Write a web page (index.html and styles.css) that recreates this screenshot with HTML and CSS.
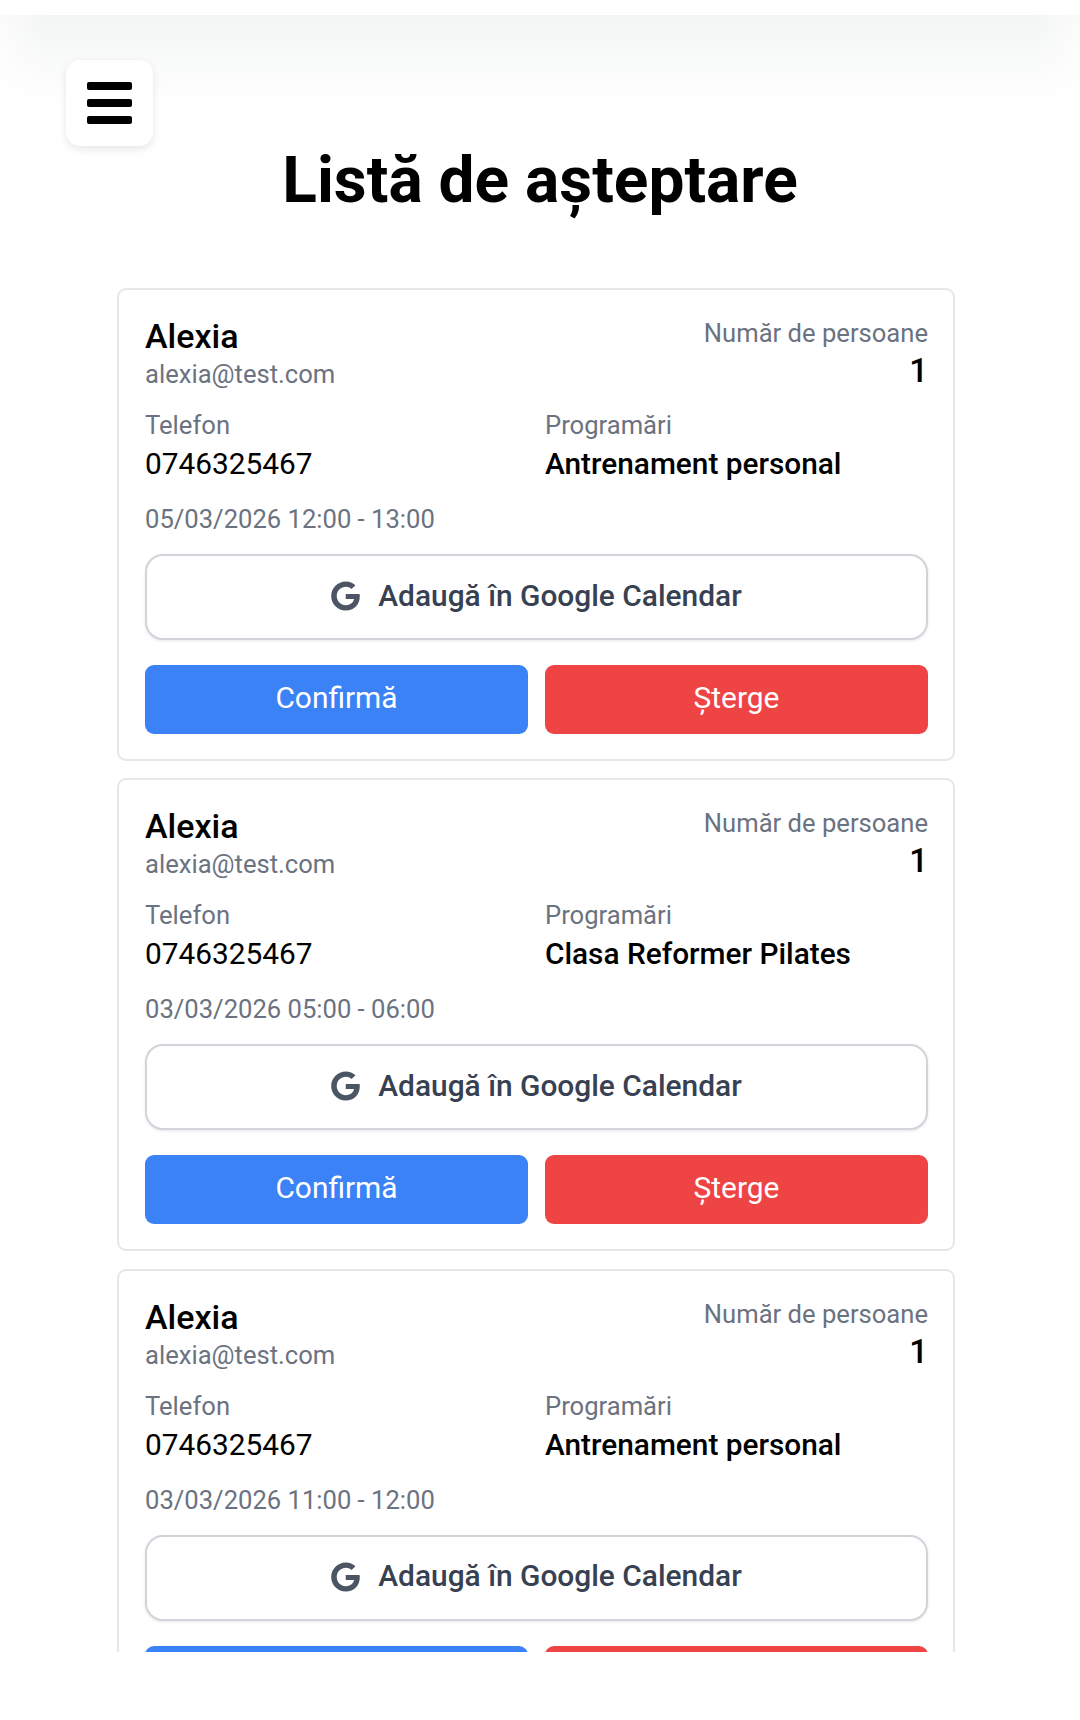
FILE: index.html
```html
<!DOCTYPE html>
<html lang="ro">
	<head>
		<meta http-equiv="content-type" content="text/html;charset=UTF-8" />
		<title>Listă de așteptare</title>
		<link rel="stylesheet" href="styles.css">
	</head>

	<body>
		<div class="page">
			<div class="topBar"></div>
			<button class="menuBtn" aria-label="Meniu">
				<span></span>
				<span></span>
				<span></span>
			</button>
			<h1 class="pageTitle">Listă de așteptare</h1>
			<div class="list">
				<div class="card">
					<div class="cardHead">
						<div>
							<div class="name">Alexia</div>
							<div class="muted">alexia@test.com</div>
						</div>
						<div class="people">
							<div class="muted">Număr de persoane</div>
							<div class="count">1</div>
						</div>
					</div>
					<div class="twoCols info">
						<div>
							<div class="muted">Telefon</div>
							<div class="phone">0746325467</div>
						</div>
						<div>
							<div class="muted">Programări</div>
							<div class="service">Antrenament personal</div>
						</div>
					</div>
					<div class="muted date">05/03/2026 12:00 - 13:00</div>
					<button class="calBtn">
						<svg class="gIcon" viewBox="0 0 488 512"><path d="M488 261.8C488 403.3 391.1 504 248 504 110.8 504 0 393.2 0 256S110.8 8 248 8c66.8 0 123 24.5 166.3 64.9l-67.5 64.9C258.5 52.6 94.3 116.6 94.3 256c0 86.5 69.1 156.6 153.7 156.6 98.2 0 135-70.4 140.8-106.9H248v-85.3h236.1c2.3 12.7 3.9 24.9 3.9 41.4z"/></svg>
						Adaugă în Google Calendar
					</button>
					<div class="twoCols actions">
						<button class="Btn blue">Confirmă</button>
						<button class="Btn red">Șterge</button>
					</div>
				</div>
				<div class="card">
					<div class="cardHead">
						<div>
							<div class="name">Alexia</div>
							<div class="muted">alexia@test.com</div>
						</div>
						<div class="people">
							<div class="muted">Număr de persoane</div>
							<div class="count">1</div>
						</div>
					</div>
					<div class="twoCols info">
						<div>
							<div class="muted">Telefon</div>
							<div class="phone">0746325467</div>
						</div>
						<div>
							<div class="muted">Programări</div>
							<div class="service">Clasa Reformer Pilates</div>
						</div>
					</div>
					<div class="muted date">03/03/2026 05:00 - 06:00</div>
					<button class="calBtn">
						<svg class="gIcon" viewBox="0 0 488 512"><path d="M488 261.8C488 403.3 391.1 504 248 504 110.8 504 0 393.2 0 256S110.8 8 248 8c66.8 0 123 24.5 166.3 64.9l-67.5 64.9C258.5 52.6 94.3 116.6 94.3 256c0 86.5 69.1 156.6 153.7 156.6 98.2 0 135-70.4 140.8-106.9H248v-85.3h236.1c2.3 12.7 3.9 24.9 3.9 41.4z"/></svg>
						Adaugă în Google Calendar
					</button>
					<div class="twoCols actions">
						<button class="Btn blue">Confirmă</button>
						<button class="Btn red">Șterge</button>
					</div>
				</div>
				<div class="card">
					<div class="cardHead">
						<div>
							<div class="name">Alexia</div>
							<div class="muted">alexia@test.com</div>
						</div>
						<div class="people">
							<div class="muted">Număr de persoane</div>
							<div class="count">1</div>
						</div>
					</div>
					<div class="twoCols info">
						<div>
							<div class="muted">Telefon</div>
							<div class="phone">0746325467</div>
						</div>
						<div>
							<div class="muted">Programări</div>
							<div class="service">Antrenament personal</div>
						</div>
					</div>
					<div class="muted date">03/03/2026 11:00 - 12:00</div>
					<button class="calBtn">
						<svg class="gIcon" viewBox="0 0 488 512"><path d="M488 261.8C488 403.3 391.1 504 248 504 110.8 504 0 393.2 0 256S110.8 8 248 8c66.8 0 123 24.5 166.3 64.9l-67.5 64.9C258.5 52.6 94.3 116.6 94.3 256c0 86.5 69.1 156.6 153.7 156.6 98.2 0 135-70.4 140.8-106.9H248v-85.3h236.1c2.3 12.7 3.9 24.9 3.9 41.4z"/></svg>
						Adaugă în Google Calendar
					</button>
					<div class="twoCols actions">
						<button class="Btn blue">Confirmă</button>
						<button class="Btn red">Șterge</button>
					</div>
				</div>
			</div>
		</div>
	</body>
</html>
```

FILE: styles.css
```css
body{
	margin: 0;
	background: white;
	font-family: Roboto, "Liberation Sans", sans-serif;
}
button{
	font-family: inherit;
	cursor: pointer;
}
.page{
	position: relative;
	height: 1652px;
	overflow: hidden;
	background: white;
}
.topBar{
	height: 15px;
	background: white;
}
/* soft shadow under the top bar, fades out a little at both sides */
.topBar::after{
	content: "";
	position: absolute;
	left: 0;
	right: 0;
	top: 15px;
	height: 90px;
	background: linear-gradient(#f3f4f4, #f8f9f9 40%, white);
	-webkit-mask-image: linear-gradient(90deg, rgba(0,0,0,0.35), black 45px, black 1035px, rgba(0,0,0,0.35));
	mask-image: linear-gradient(90deg, rgba(0,0,0,0.35), black 45px, black 1035px, rgba(0,0,0,0.35));
}
.menuBtn{
	position: absolute;
	left: 66px;
	top: 60px;
	width: 87px;
	height: 86px;
	padding: 0;
	border: none;
	border-radius: 14px;
	background: white;
	box-shadow: 0 3px 8px rgba(0,0,0,0.1);
	display: flex;
	flex-direction: column;
	justify-content: center;
	align-items: center;
	gap: 9px;
}
.menuBtn span{
	width: 45px;
	height: 8px;
	border-radius: 2px;
	background: black;
}
.pageTitle{
	margin: 126px 0 0 0;
	font-size: 64px;
	line-height: 80px;
	font-weight: 700;
	text-align: center;
	color: black;
}
.list{
	margin: 67px 125px 0 117px;
	display: flex;
	flex-direction: column;
	gap: 17.3px;
}
.card{
	flex-shrink: 0;
	padding: 26px 25px 25px 26px;
	border: solid 2px #e5e7eb;
	border-radius: 9px;
	background: white;
}
.cardHead{
	display: flex;
	justify-content: space-between;
	align-items: flex-start;
}
.name{
	font-size: 34px;
	line-height: 41px;
	font-weight: 500;
	color: black;
}
.muted{
	font-size: 25.6px;
	line-height: 34px;
	color: #6b7280;
}
.people{
	text-align: right;
}
.count{
	font-size: 33px;
	line-height: 41px;
	font-weight: 500;
	color: black;
}
.twoCols{
	display: grid;
	grid-template-columns: 1fr 1fr;
	gap: 17px;
}
.info{
	margin-top: 17px;
}
.phone,.service{
	font-size: 29.8px;
	line-height: 40px;
	margin-top: 2px;
	color: black;
}
.service{
	font-weight: 500;
}
.date{
	margin-top: 18px;
}
.calBtn{
	width: 100%;
	height: 86px;
	margin-top: 18px;
	padding: 0 0 4px 0;
	border: solid 2px #d1d5db;
	border-radius: 18px;
	background: white;
	box-shadow: 0 1px 3px rgba(0,0,0,0.1);
	font-size: 29.9px;
	font-weight: 500;
	color: #374151;
	display: flex;
	justify-content: center;
	align-items: center;
	gap: 18px;
}
.gIcon{
	width: 29px;
	height: 30px;
	margin-top: 2px;
	fill: #4b5563;
}
.actions{
	margin-top: 25px;
}
.Btn{
	height: 69px;
	padding: 0 0 4px 0;
	border: none;
	border-radius: 9px;
	font-size: 29.9px;
	color: white;
}
.blue{
	background-color: #3b82f6;
}
.red{
	background-color: #ef4444;
}
```
